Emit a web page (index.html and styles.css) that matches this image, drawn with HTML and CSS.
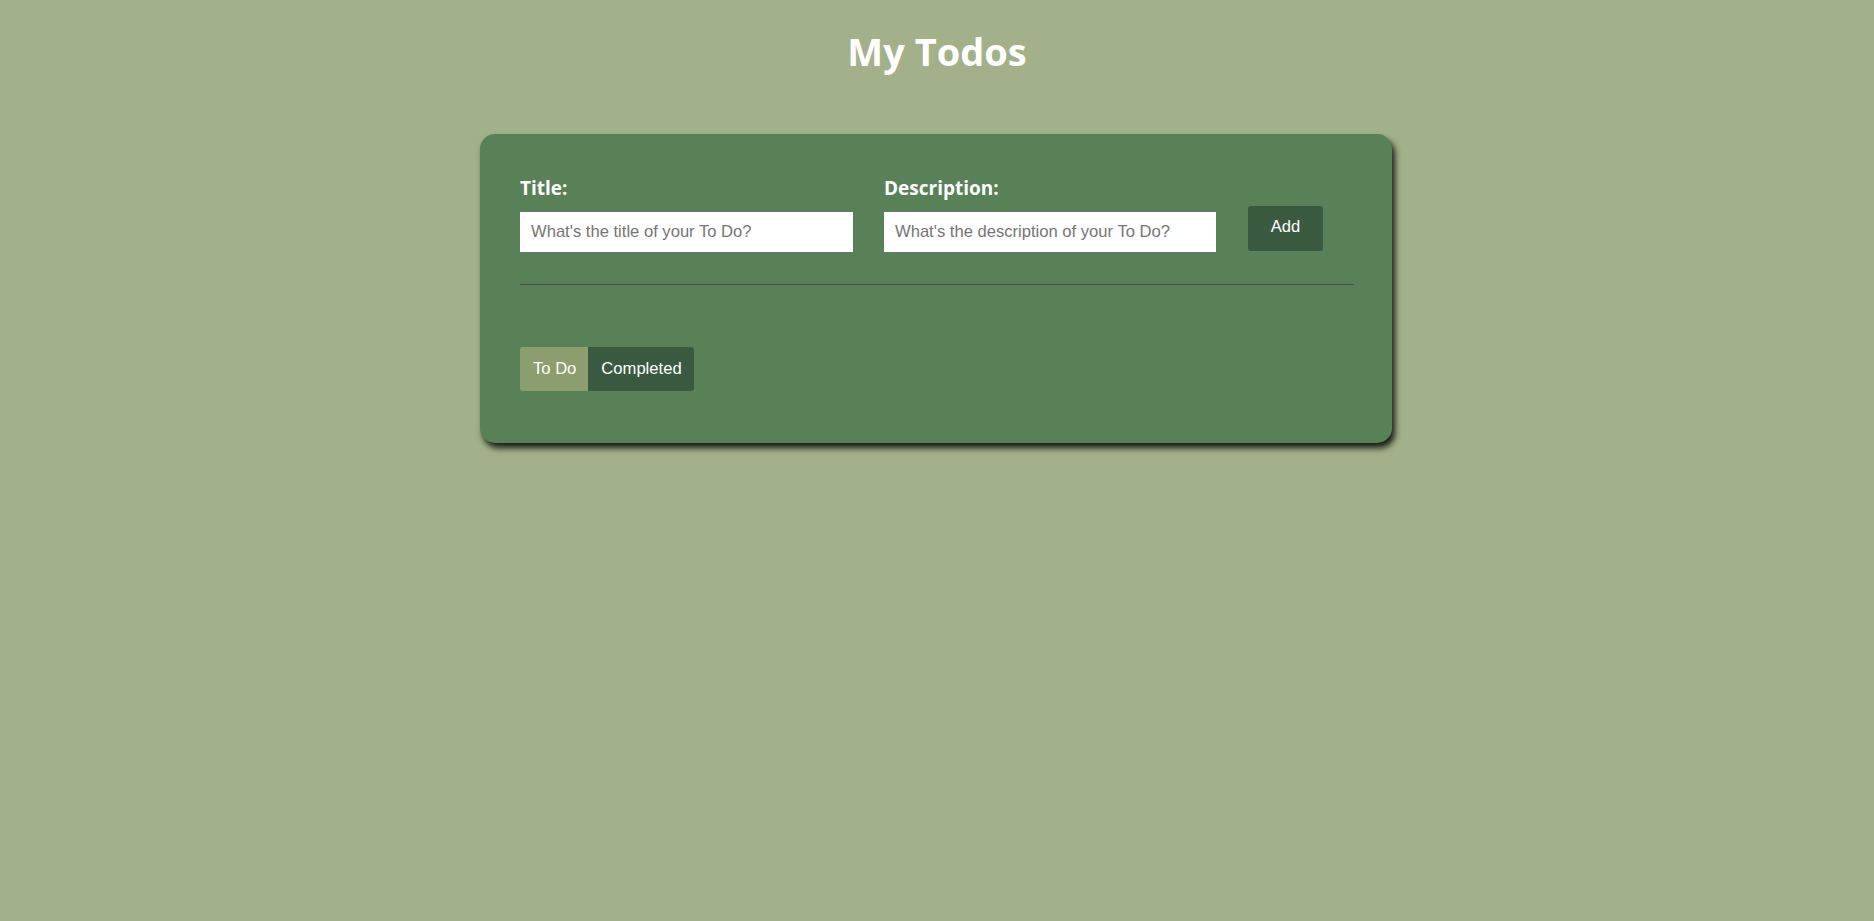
FILE: index.html
```html
<!DOCTYPE html>
<html lang="en">
<head>
<meta charset="utf-8">
<title>My Todos</title>
<link rel="stylesheet" href="styles.css">
</head>
<body>
  <h1 class="page-title">My Todos</h1>
  <div class="todo-wrapper">
    <div class="todo-input">
      <div class="todo-input-item">
        <label class="field-label">Title:</label>
        <input class="field-input field-title" type="text" placeholder="What's the title of your To Do?">
      </div>
      <div class="todo-input-item">
        <label class="field-label">Description:</label>
        <input class="field-input field-desc" type="text" placeholder="What's the description of your To Do?">
      </div>
      <button class="primary-btn" type="button">Add</button>
    </div>
    <hr class="divider">
    <div class="tab-area">
      <button class="tab-btn tab-active" type="button">To Do</button>
      <button class="tab-btn" type="button">Completed</button>
    </div>
  </div>
</body>
</html>
```
FILE: styles.css
```css
html, body {
  margin: 0;
  padding: 0;
}
body {
  background-color: #a3b18a;
  font-family: "Open Sans", "Noto Sans", sans-serif;
  min-height: 921px;
}
.page-title {
  margin: 24px 0 0;
  text-align: center;
  color: #ffffff;
  font-size: 38px;
  font-weight: 700;
  line-height: 54px;
}
.todo-wrapper {
  box-sizing: border-box;
  width: 912px;
  margin: 56px 0 0 480px;
  background-color: #588157;
  border-radius: 15px;
  padding: 40px 38px 52px 40px;
  box-shadow: 3px 5px 6px rgba(0, 0, 0, 0.85);
}
.todo-input {
  display: flex;
  align-items: flex-end;
  gap: 31px;
}
.todo-input-item {
  display: flex;
  flex-direction: column;
}
.field-label {
  color: #ffffff;
  font-size: 19px;
  font-weight: 700;
  line-height: 28px;
  margin-bottom: 10px;
}
.field-input {
  box-sizing: border-box;
  height: 40px;
  border: none;
  outline: none;
  padding: 0 10px 0 11px;
  background: #ffffff;
  font-family: "Liberation Sans", Arial, sans-serif;
  font-size: 16.6px;
  color: #333;
}
.field-input::placeholder {
  color: #757575;
}
.field-title {
  width: 333px;
}
.field-desc {
  width: 332px;
}
.primary-btn {
  box-sizing: border-box;
  width: 75px;
  height: 45px;
  margin: 0 0 1px 1px;
  border: none;
  border-radius: 3px;
  background-color: #3a5a40;
  color: #ffffff;
  font-family: "Liberation Sans", Arial, sans-serif;
  font-size: 16.6px;
  padding: 0 0 4px;
  cursor: pointer;
}
.divider {
  margin: 32px 0 0;
  border: none;
  border-top: 1px solid #4d4d4d;
  height: 0;
}
.tab-area {
  display: flex;
  margin-top: 62px;
}
.tab-btn {
  box-sizing: border-box;
  height: 44px;
  border: none;
  padding: 0 12px 0 13px;
  background-color: #3a5a40;
  color: #ffffff;
  font-family: "Liberation Sans", Arial, sans-serif;
  font-size: 16.6px;
  cursor: pointer;
}
.tab-btn:first-child {
  border-radius: 3px 0 0 3px;
}
.tab-btn:last-child {
  border-radius: 0 3px 3px 0;
}
.tab-active {
  background-color: #8c9e6e;
}
```
